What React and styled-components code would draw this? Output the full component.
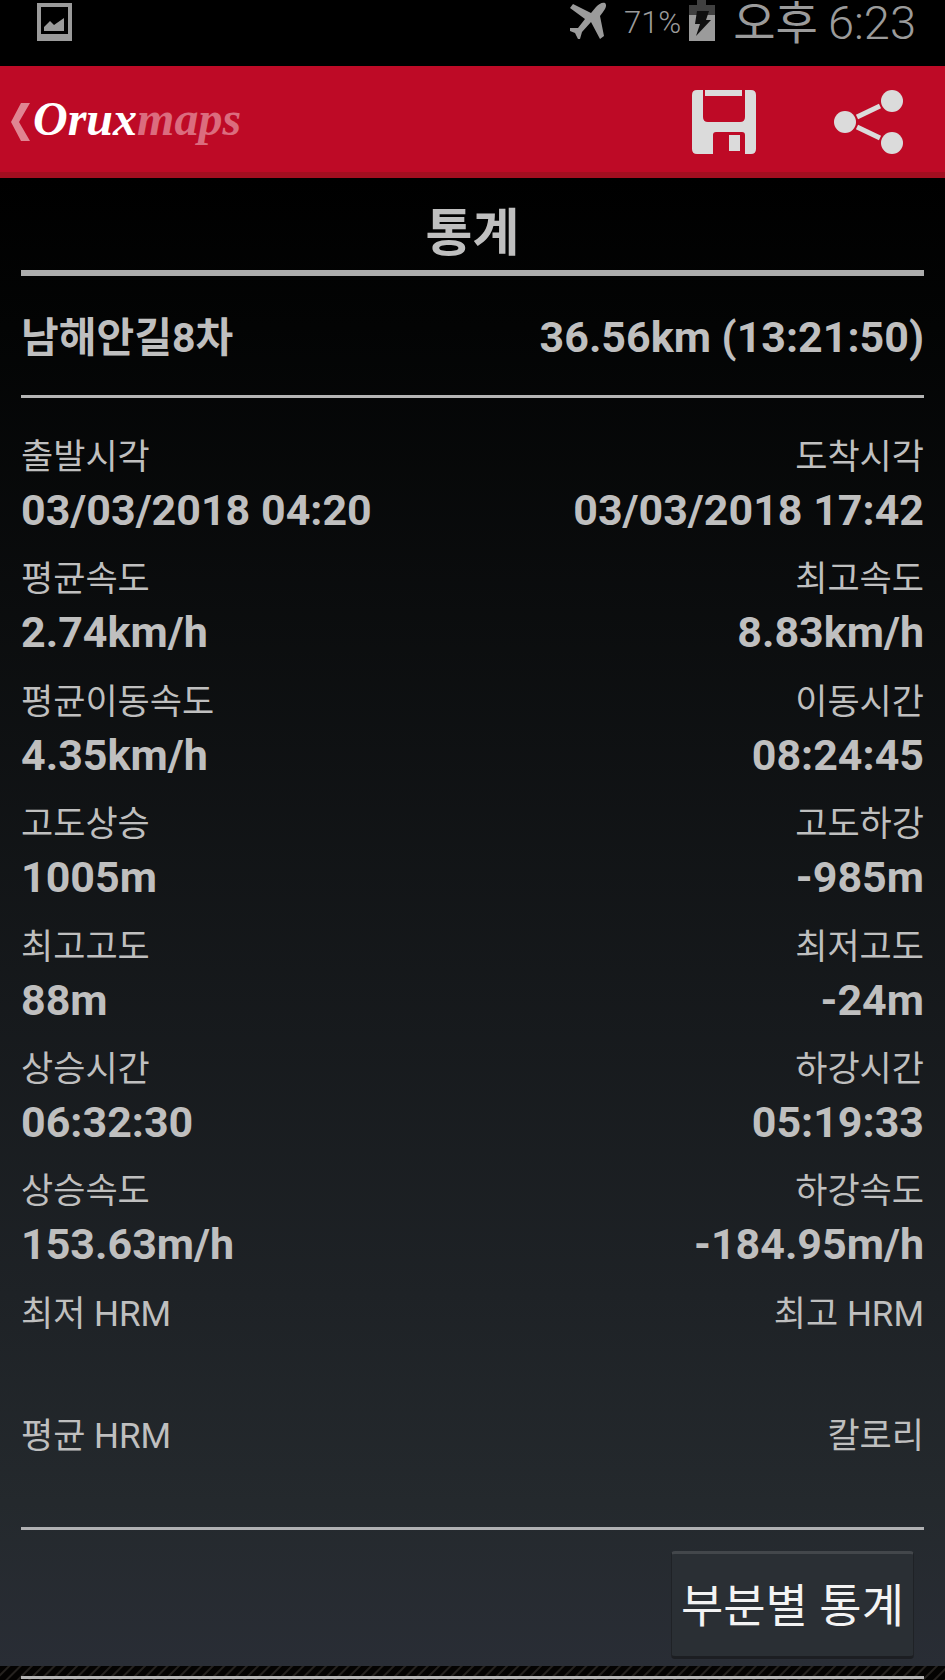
import React from 'react';
import styled, { createGlobalStyle } from 'styled-components';

const GlobalStyle = createGlobalStyle`
  * {
    box-sizing: border-box;
  }

  body {
    margin: 0;
    background: #000;
    font-family: Roboto, 'Noto Sans CJK KR', sans-serif;
    color: #bfbfbf;
  }
`;

// Styled components
const Page = styled.div`
  min-height: 100vh;
  display: flex;
  flex-direction: column;
`;

const StatusBar = styled.div`
  display: flex;
  align-items: flex-start;
  justify-content: space-between;
  height: 66px;
  padding: 0 29px 0 37px;
  color: #9b9b9b;
`;

const StatusGroup = styled.div`
  display: flex;
  align-items: flex-start;
`;

const PictureIcon = styled.svg`
  display: block;
  margin-top: 3px;
`;

const PlaneIcon = styled.svg`
  display: block;
`;

const BatteryLevel = styled.span`
  margin: 0 8px 0 17px;
  font-size: 31px;
  line-height: 46px;
  font-weight: 300;
`;

const Clock = styled.span`
  display: flex;
  gap: 10px;
  margin-left: 18px;
  font-size: 47px;
  line-height: 46px;
  font-weight: 300;
`;

const DayPart = styled.span`
  font-size: 46px;
  line-height: 46px;
  font-weight: 400;
`;

const AppBar = styled.header`
  display: flex;
  align-items: center;
  justify-content: space-between;
  height: 112px;
  padding: 5px 42px 0 11px;
  background: #be0a26;
  border-bottom: 6px solid #a30e20;
`;

const BackLink = styled.a`
  display: flex;
  align-items: center;
  gap: 3px;
  text-decoration: none;
`;

const Logo = styled.span`
  padding-bottom: 6px;
  font-family: 'Liberation Serif', serif;
  font-size: 48px;
  line-height: 56px;
  font-style: italic;
  font-weight: bold;
  color: #fff;
`;

const LogoTail = styled.span`
  color: #db6c7e;
`;

const Actions = styled.div`
  display: flex;
  gap: 78px;
`;

const IconButton = styled.button`
  display: flex;
  padding: 0;
  border: none;
  background: none;
  color: #dbdbdb;
  cursor: pointer;
`;

const Panel = styled.main`
  flex: 1;
  display: flex;
  flex-direction: column;
  padding: 0 21px;
  background: linear-gradient(#000 0%, #030404 10%, #1e2226 75%, #24292d 89%, #292d35 100%);
`;

const Title = styled.h1`
  margin: 0;
  padding-top: 20px;
  border-bottom: 6px solid #adadad;
  font-size: 51px;
  line-height: 72px;
  font-weight: bold;
  text-align: center;
`;

const Summary = styled.div`
  display: flex;
  align-items: baseline;
  justify-content: space-between;
  padding: 36px 0 32px;
  border-bottom: 3px solid #b5b5b5;
  line-height: 50px;
  font-weight: bold;
`;

const TrackName = styled.span`
  font-size: 41px;
`;

const TrackTotal = styled.span`
  font-size: 43px;
`;

const Stats = styled.dl`
  flex: 1;
  display: flex;
  flex-direction: column;
  justify-content: space-between;
  margin: 0;
  padding: 34px 0 12px;
`;

const StatRow = styled.div`
  display: flex;
  justify-content: space-between;
`;

const Stat = styled.div`
  text-align: ${(props) => props.$align};
`;

const Label = styled.dt`
  font-size: 35px;
  line-height: 52px;
`;

const Value = styled.dd`
  min-height: 52px;
  margin: 0;
  font-size: 43px;
  line-height: 52px;
  font-weight: bold;
`;

const Footer = styled.footer`
  display: flex;
  justify-content: flex-end;
  padding: 21px 10px 7px;
  border-top: 3px solid #b0b1b3;
`;

const SegmentsButton = styled.button`
  height: 108px;
  padding: 0 9px 6px;
  border: 1px solid #1f2226;
  border-top: 3px solid #43474b;
  border-bottom: 3px solid #1c1e22;
  border-radius: 4px;
  background: #2a2f34;
  color: #f3f3f3;
  font-family: inherit;
  font-size: 46px;
  cursor: pointer;
`;

const Hatch = styled.div`
  height: 14px;
  padding: 10px 21px 0;
  background: repeating-linear-gradient(135deg, #040302 0 5px, #25221f 6px 7px, #040302 8px);
`;

const Rule = styled.hr`
  height: 3px;
  margin: 0;
  border: none;
  background: #b5b5b5;
`;

const rows = [
  [['출발시각', '03/03/2018 04:20'], ['도착시각', '03/03/2018 17:42']],
  [['평균속도', '2.74km/h'], ['최고속도', '8.83km/h']],
  [['평균이동속도', '4.35km/h'], ['이동시간', '08:24:45']],
  [['고도상승', '1005m'], ['고도하강', '-985m']],
  [['최고고도', '88m'], ['최저고도', '-24m']],
  [['상승시간', '06:32:30'], ['하강시간', '05:19:33']],
  [['상승속도', '153.63m/h'], ['하강속도', '-184.95m/h']],
  [['최저 HRM', ''], ['최고 HRM', '']],
  [['평균 HRM', ''], ['칼로리', '']],
];

function StatusIcons() {
  return (
    <StatusGroup>
      <PlaneIcon width="38" height="42" viewBox="0 0 38 42" fill="currentColor">
        <path d="M36 3C33 2 30 4 27 7L22 13L4 4L1 8L16 19L9 28L1 28L1 31L6 33L9 39L11 39L13 32L22 22L31 39L35 36L31 16L34 12C37 8 38 5 36 3Z" />
      </PlaneIcon>
      <BatteryLevel>71%</BatteryLevel>
      <svg width="26" height="41" viewBox="0 0 26 41">
        <path d="M8 0H17V5H26V15H0V5H8Z" fill="#404040" />
        <path d="M0 15H26V41H0Z" fill="#9b9b9b" />
        <path d="M8 11H20L17 20H22L7 36L11 24H6Z" fill="#101010" />
      </svg>
      <Clock>
        <DayPart>오후</DayPart>
        <span>6:23</span>
      </Clock>
    </StatusGroup>
  );
}

function App() {
  return (
    <>
      <GlobalStyle />
      <Page>
        <StatusBar>
          <PictureIcon width="35" height="38" viewBox="0 0 35 38" fill="#9b9b9b">
            <path fillRule="evenodd" d="M0 0H35V38H0ZM4 4V31H31V4Z" />
            <path d="M7 28V24L13 18L17 22L27 15V28Z" />
          </PictureIcon>
          <StatusIcons />
        </StatusBar>

        <AppBar>
          <BackLink href="#">
            <svg width="19" height="38" viewBox="0 0 19 38">
              <path d="M10 0H19L8 19L19 38H10L0 19Z" fill="#e08592" />
            </svg>
            <Logo>
              Orux<LogoTail>maps</LogoTail>
            </Logo>
          </BackLink>
          <Actions>
            <IconButton type="button" aria-label="저장">
              <svg width="64" height="64" viewBox="0 0 64 64" fill="currentColor">
                <path d="M5 0H11V27Q11 32 16 32H48Q53 32 53 27V0H59Q64 0 64 5V59Q64 64 59 64H53V45Q53 42 50 42H24Q21 42 21 45V64H5Q0 64 0 59V5Q0 0 5 0Z" />
                <path d="M13 0H50V6H13ZM37 45H48V61H37Z" />
              </svg>
            </IconButton>
            <IconButton type="button" aria-label="공유">
              <svg width="69" height="64" viewBox="0 0 69 64" fill="currentColor">
                <circle cx="11" cy="32" r="11" />
                <circle cx="58" cy="11" r="11" />
                <circle cx="58" cy="53" r="11" />
                <path d="M23 27L46 16M23 37L46 48" stroke="currentColor" strokeWidth="5" />
              </svg>
            </IconButton>
          </Actions>
        </AppBar>

        <Panel>
          <Title>통계</Title>
          <Summary>
            <TrackName>남해안길8차</TrackName>
            <TrackTotal>36.56km (13:21:50)</TrackTotal>
          </Summary>
          <Stats>
            {rows.map(([left, right]) => (
              <StatRow key={left[0]}>
                <Stat $align="left">
                  <Label>{left[0]}</Label>
                  <Value>{left[1]}</Value>
                </Stat>
                <Stat $align="right">
                  <Label>{right[0]}</Label>
                  <Value>{right[1]}</Value>
                </Stat>
              </StatRow>
            ))}
          </Stats>
          <Footer>
            <SegmentsButton type="button">부분별 통계</SegmentsButton>
          </Footer>
        </Panel>

        <Hatch>
          <Rule />
        </Hatch>
      </Page>
    </>
  );
}

export default App;
